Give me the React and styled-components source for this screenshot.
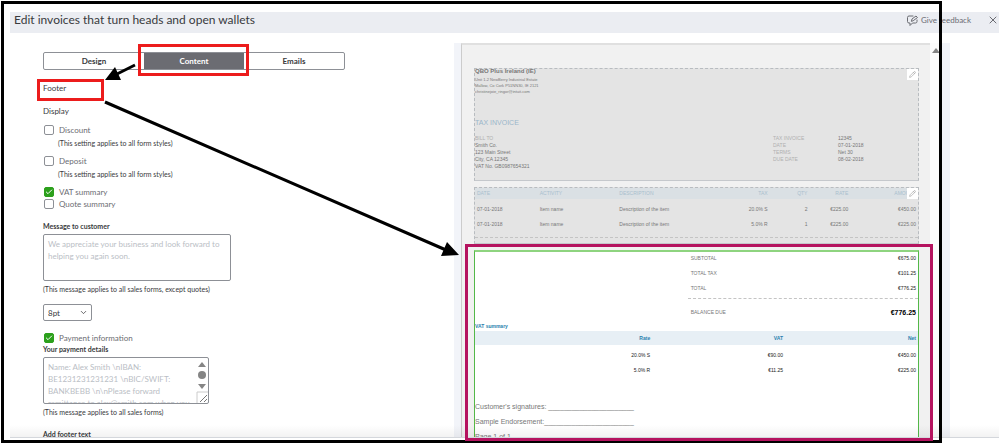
import React from 'react'
import styled, { createGlobalStyle, css } from 'styled-components'
import { Check, ChevronDown, Pencil, X } from 'lucide-react'

const GlobalStyle = createGlobalStyle`
  * {
    box-sizing: border-box;
  }
  body {
    margin: 0;
    background: #fff;
    color: #393a3d;
    font: 8px/10px Lato, sans-serif;
  }
  button, input, select, textarea {
    font: inherit;
    color: inherit;
  }
`

const Page = styled.div`
  position: relative;
  display: flex;
  flex-direction: column;
  height: 100vh;
  padding: 12px 0 6px 10px;
  overflow: hidden;
`

const TopBar = styled.header`
  display: flex;
  align-items: center;
  flex: none;
  height: 21px;
  padding-left: 4px;
  background: #ebedf2;
`

const Title = styled.h1`
  flex: 1;
  margin: 0;
  padding-bottom: 6px;
  font-size: 12px;
  font-weight: 400;
  line-height: 15px;
`

const BarButton = styled.button`
  display: flex;
  align-items: center;
  gap: 3px;
  margin: 0 0 5px 16px;
  padding: 0;
  border: 0;
  background: none;
  color: #6b6c72;
`

const Main = styled.main`
  display: flex;
  align-items: flex-start;
  flex: 1;
  min-height: 0;
  position: relative;
  padding: 0 49px 0 33px;
  border-bottom: 1px solid #d4d7dc;
  overflow: hidden;
  &::after {
    content: '';
    position: absolute;
    inset: auto 0 0 0;
    height: 12px;
    background: linear-gradient(rgba(0,0,0,0), rgba(0,0,0,.05));
  }
`

/* ---------- left side, the form ---------- */

const Form = styled.form`
  flex: none;
  width: 302px;
  margin-right: 109px;
  padding-top: 19px;
`

const Tabs = styled.div`
  display: flex;
  height: 18px;
  border: 1px solid #8d9096;
  border-radius: 2px;
`

const Tab = styled.button`
  flex: 1;
  padding: 0;
  border: 0;
  background: none;
  font-weight: 700;
  ${({ $active }) => $active && css`
    background: #6b6c72;
    color: #fff;
  `}
`

const Heading = styled.h2`
  margin: 13px 0 0;
  font-size: 8px;
  font-weight: 400;
`

const Option = styled.label`
  display: flex;
  align-items: center;
  gap: 5px;
  height: 10px;
  margin-top: ${({ $gap }) => $gap || 9}px;
  padding-left: 1px;
  color: #6b6c72;
`

const Box = styled.span`
  display: grid;
  place-items: center;
  width: 10px;
  height: 10px;
  border: 1px solid ${({ $on }) => ($on ? '#2ca01c' : '#8d9096')};
  border-radius: 2px;
  background: ${({ $on }) => ($on ? '#2ca01c' : '#fff')};
  color: #fff;
  input {
    grid-area: 1 / 1;
    width: 8px;
    height: 8px;
    margin: 0;
    opacity: 0;
  }
  svg {
    grid-area: 1 / 1;
  }
`

const Hint = styled.p`
  margin: 4px 0 0 ${({ $indent }) => ($indent ? 15 : 0)}px;
  font-size: 7px;
  line-height: 8px;
`

const FieldLabel = styled.label`
  display: block;
  margin-top: ${({ $gap }) => $gap || 0}px;
  font-size: 7px;
  font-weight: 700;
`

const Area = styled.div`
  position: relative;
  width: ${({ $width }) => $width}px;
  margin-top: 3px;
`

const TextArea = styled.textarea`
  display: block;
  width: 100%;
  height: 47px;
  padding: 3px 4px;
  border: 1px solid #8d9096;
  border-radius: 2px;
  line-height: 12px;
  resize: none;
  overflow: hidden;
  &::placeholder {
    color: #babec5;
    opacity: 1;
  }
`

const AreaScroll = styled.svg`
  position: absolute;
  top: 1px;
  right: 1px;
`

const SelectWrap = styled.div`
  position: relative;
  width: 49px;
  margin-top: 11px;
  svg {
    position: absolute;
    top: 4px;
    right: 4px;
  }
`

const Select = styled.select`
  appearance: none;
  display: block;
  width: 100%;
  height: 17px;
  padding: 0 4px;
  border: 1px solid #8d9096;
  border-radius: 2px;
  background: #fff;
`

/* ---------- right side, the preview ---------- */

const Preview = styled.section`
  display: flex;
  flex: 1;
  min-width: 0;
  margin-top: 10px;
  padding: 0 8px 0 7px;
  background: #f2f4f9;
  font: 5px/7px "Liberation Sans", Arial, sans-serif;
`

const Paper = styled.div`
  flex: 1;
  padding: 23px 11px 0 12px;
  border-top: 2px solid #e0e0e0;
  border-left: 1px solid #ccc;
  background: #f1f1f1;
`

const ScrollTrack = styled.div`
  width: 12px;
  padding: 5px 0 0 2px;
  background: #fcfcfc;
`

const Block = styled.div`
  position: relative;
  margin-bottom: 6px;
  border: 1px dashed #b8bcc0;
  border-bottom: 1px solid #c5c8cc;
  background: #e4e4e4;
  color: #777;
`

const EditButton = styled.button`
  position: absolute;
  top: 0;
  right: 0;
  display: grid;
  place-items: center;
  width: 11px;
  height: 11px;
  padding: 0;
  border: 0;
  background: #fff;
  color: #999;
`

const Company = styled.div`
  font-size: 6px;
  line-height: 5px;
  font-weight: 700;
`

const Address = styled.address`
  margin-top: 3px;
  font-size: 4px;
  font-style: normal;
  line-height: 6px;
`

const InvoiceTitle = styled.h3`
  margin: 23px 0 7px;
  color: #9ab6ca;
  font-size: 7px;
  font-weight: 400;
  line-height: 10px;
`

const InfoRow = styled.div`
  display: flex;
  padding-bottom: 10px;
`

const BillTo = styled.div`
  flex: 1;
`

const Muted = styled.div`
  color: #b0b0b0;
`

const Facts = styled.dl`
  display: grid;
  grid-template-columns: 65px 80px;
  grid-auto-rows: 7px;
  margin: 0;
  dt {
    color: #b0b0b0;
  }
  dd {
    margin: 0;
  }
`

const Table = styled.table`
  width: 100%;
  table-layout: fixed;
  border-collapse: collapse;
  th, td {
    height: 15px;
    padding: 0 2px 0 2px;
    text-align: right;
    white-space: nowrap;
  }
  tbody tr:first-child td {
    height: 18px;
    padding-top: 3px;
  }
`

const Items = styled(Table)`
  th {
    height: 11px;
    background: #dae0e4;
    color: #a9bfce;
    font-weight: 400;
  }
  th:nth-child(-n + 3), td:nth-child(-n + 3) {
    text-align: left;
  }
`

const Vat = styled(Table)`
  color: #222;
  caption {
    height: 8px;
    color: #2a7fae;
    font-size: 5px;
    font-weight: 700;
    line-height: 6px;
    text-align: left;
  }
  th {
    height: 14px;
    background: #e7eff5;
    color: #2a7fae;
  }
`

const Rule = styled.div`
  margin: ${({ $gap }) => $gap}px 0;
  border-top: 1px dashed #c4c4c4;
`

const FooterBlock = styled.div`
  border: 1px solid #53b848;
  border-top: 2px solid #8ed47f;
  border-bottom: 0;
  background: #fff;
`

const Totals = styled.div`
  width: 52%;
  margin: 0 0 4px auto;
`

const TotalRow = styled.div`
  display: flex;
  align-items: center;
  justify-content: space-between;
  height: 13px;
  margin-bottom: 2px;
  padding: 0 2px 0 3px;
  color: #777;
  span:last-child {
    color: #222;
  }
`

const BalanceRow = styled(TotalRow)`
  margin: 7px 0 0;
  span:last-child {
    color: #000;
    font-size: 7px;
    font-weight: 700;
  }
`

const Signature = styled.p`
  margin: 0;
  color: #777;
  font-size: 7px;
  line-height: 15px;
`

const Signatures = styled.div`
  margin-top: 21px;
`

/* ---------- guide marks drawn over the screen ---------- */

const Frame = styled.div`
  position: absolute;
  top: 1px;
  right: 57px;
  bottom: 1px;
  left: 1px;
  border: 3px solid #000;
  pointer-events: none;
`

const FooterFrame = styled(Frame)`
  top: 244px;
  right: 66px;
  bottom: 3px;
  left: 465px;
  border-color: #b5135f;
`

const Mark = styled.div`
  position: absolute;
  top: ${({ $top }) => $top}px;
  left: ${({ $left }) => $left}px;
  width: ${({ $width }) => $width}px;
  height: ${({ $height }) => $height}px;
  border: 3px solid #ec1c1c;
  pointer-events: none;
`

const Arrows = styled.svg`
  position: absolute;
  top: 0;
  left: 0;
  pointer-events: none;
`

const columns = [
  ['DATE', 63],
  ['ACTIVITY', 80],
  ['DESCRIPTION', 115],
  ['TAX', 38],
  ['QTY', 40],
  ['RATE', 41],
  ['AMOUNT', 68]
]

const items = [
  ['07-01-2018', 'Item name', 'Description of the item', '20.0% S', '2', '€225.00', '€450.00'],
  ['07-01-2018', 'Item name', 'Description of the item', '5.0% R', '1', '€225.00', '€225.00']
]

const vatRows = [
  ['20.0% S', '€90.00', '€450.00'],
  ['5.0% R', '€11.25', '€225.00']
]

const totals = [
  ['SUBTOTAL', '€675.00'],
  ['TOTAL TAX', '€101.25'],
  ['TOTAL', '€776.25']
]

const paymentText = 'Name: Alex Smith \\nIBAN: BE1231231231231 \\nBIC/SWIFT: BANKBEBB \\n\\nPlease forward remittance to alex@smith.com when you pay'

const CheckOption = ({ label, checked, gap }) => (
  <Option $gap={gap}>
    <Box $on={checked}>
      <input type="checkbox" defaultChecked={checked} />
      {checked && <Check size={8} strokeWidth={3} />}
    </Box>
    {label}
  </Option>
)

const FeedbackIcon = () => (
  <svg width="11" height="11" viewBox="0 0 22 22" fill="none" stroke="currentColor" strokeWidth="2" strokeLinejoin="round" strokeLinecap="round">
    <path d="M12 2H4a3 3 0 0 0-3 3v8a3 3 0 0 0 3 3h2v5l5-5h6a3 3 0 0 0 3-3v-3" />
    <path d="M9 12l1-4 8-6 3 3-8 6z" />
  </svg>
)

const Edit = ({ label }) => (
  <EditButton type="button" aria-label={label}>
    <Pencil size={7} strokeWidth={2} />
  </EditButton>
)

const InvoiceForm = () => (
  <Form>
    <Tabs>
      <Tab type="button">Design</Tab>
      <Tab type="button" $active>Content</Tab>
      <Tab type="button">Emails</Tab>
    </Tabs>
    <Heading>Footer</Heading>
    <Heading>Display</Heading>
    <CheckOption label="Discount" />
    <Hint $indent>(This setting applies to all form styles)</Hint>
    <CheckOption label="Deposit" />
    <Hint $indent>(This setting applies to all form styles)</Hint>
    <CheckOption label="VAT summary" checked />
    <CheckOption label="Quote summary" gap={2} />

    <FieldLabel htmlFor="message" $gap={12}>Message to customer</FieldLabel>
    <Area $width={188}>
      <TextArea id="message" placeholder="We appreciate your business and look forward to helping you again soon." />
    </Area>
    <Hint>(This message applies to all sales forms, except quotes)</Hint>
    <SelectWrap>
      <Select aria-label="Text size" defaultValue="8pt">
        <option>8pt</option>
      </Select>
      <ChevronDown size={9} />
    </SelectWrap>

    <CheckOption label="Payment information" checked gap={12} />
    <FieldLabel htmlFor="payment" $gap={1}>Your payment details</FieldLabel>
    <Area $width={166}>
      <TextArea id="payment" placeholder={paymentText} style={{ paddingRight: 14 }} />
      <AreaScroll width="12" height="45" viewBox="0 0 12 45" fill="#858585">
        <path d="M6 4l4 5H2z" />
        <circle cx="6" cy="17" r="4" />
        <path d="M6 31l4-5H2z" />
        <path d="M1 45V34h11" fill="none" stroke="#ccc" />
        <path d="M4 44l7-7M8 44l3-3" stroke="#777" />
      </AreaScroll>
    </Area>
    <Hint>(This message applies to all sales forms)</Hint>
    <FieldLabel as="div" $gap={13}>Add footer text</FieldLabel>
  </Form>
)

const InvoicePreview = () => (
  <Preview>
    <Paper>
      <Block>
        <Edit label="Edit header" />
        <Company>QBO Plus Ireland (IE)</Company>
        <Address>
          Unit 1-2 NewBerry Industrial Estate<br />
          Mallow, Co Cork P51NN30, IE 2121<br />
          christinejoie_ringor@intuit.com
        </Address>
        <InvoiceTitle>TAX INVOICE</InvoiceTitle>
        <InfoRow>
          <BillTo>
            <Muted>BILL TO</Muted>
            Smith Co.<br />
            123 Main Street<br />
            City, CA 12345<br />
            VAT No. GB0987654321
          </BillTo>
          <Facts>
            <dt>TAX INVOICE</dt><dd>12345</dd>
            <dt>DATE</dt><dd>07-01-2018</dd>
            <dt>TERMS</dt><dd>Net 30</dd>
            <dt>DUE DATE</dt><dd>08-02-2018</dd>
          </Facts>
        </InfoRow>
      </Block>

      <Block>
        <Edit label="Edit items" />
        <Items>
          <colgroup>
            {columns.map(([name, share]) => <col key={name} style={{ width: `${share / 4.45}%` }} />)}
          </colgroup>
          <thead>
            <tr>{columns.map(([name]) => <th key={name}>{name}</th>)}</tr>
          </thead>
          <tbody>
            {items.map((row, i) => (
              <tr key={i}>{row.map((cell, j) => <td key={j}>{cell}</td>)}</tr>
            ))}
          </tbody>
        </Items>
        <Rule $gap={5} />
      </Block>

      <FooterBlock>
        <Totals>
          {totals.map(([name, amount]) => (
            <TotalRow key={name}><span>{name}</span><span>{amount}</span></TotalRow>
          ))}
          <Rule $gap={3} />
          <BalanceRow><span>BALANCE DUE</span><span>€776.25</span></BalanceRow>
        </Totals>
        <Vat>
          <caption>VAT summary</caption>
          <colgroup>
            <col style={{ width: '40%' }} />
            <col style={{ width: '30%' }} />
            <col style={{ width: '30%' }} />
          </colgroup>
          <thead>
            <tr><th>Rate</th><th>VAT</th><th>Net</th></tr>
          </thead>
          <tbody>
            {vatRows.map((row) => (
              <tr key={row[0]}>{row.map((cell) => <td key={cell}>{cell}</td>)}</tr>
            ))}
          </tbody>
        </Vat>
        <Signatures>
          <Signature>Customer's signatures: {'_'.repeat(22)}</Signature>
          <Signature>Sample Endorsement:{'_'.repeat(23)}</Signature>
          <Signature>Page 1 of 1</Signature>
        </Signatures>
      </FooterBlock>
    </Paper>
    <ScrollTrack>
      <svg width="8" height="6" viewBox="0 0 8 6"><path d="M4 0l4 5H0z" fill="#858585" /></svg>
    </ScrollTrack>
  </Preview>
)

const App = () => (
  <>
    <GlobalStyle />
    <Page>
      <TopBar>
        <Title>Edit invoices that turn heads and open wallets</Title>
        <BarButton type="button"><FeedbackIcon />Give feedback</BarButton>
        <BarButton type="button" aria-label="Close"><X size={12} strokeWidth={2} /></BarButton>
      </TopBar>
      <Main>
        <InvoiceForm />
        <InvoicePreview />
      </Main>

      <Frame />
      <FooterFrame />
      <Mark $top={44} $left={138} $width={111} $height={32} />
      <Mark $top={79} $left={37} $width={67} $height={22} />
      <Arrows width="460" height="260" viewBox="0 0 460 260">
        <path d="M135 65L115 75M105 102L446 250" stroke="#000" strokeWidth="3" />
        <path d="M105 80L115 67L121 80zM459 255L447 242L441 256z" />
      </Arrows>
    </Page>
  </>
)

export default App
